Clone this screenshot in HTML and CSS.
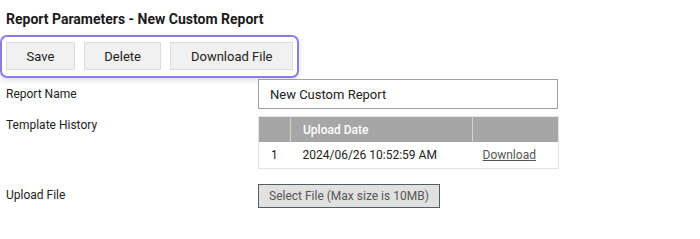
FILE: index.html
```html
<!DOCTYPE html>
<html lang="en">
<head>
    <meta charset="UTF-8">
    <title>Report Parameters</title>
    <link rel="stylesheet" href="styles.css">
</head>
<body>

    <h1 class="page-title">Report Parameters - New Custom Report</h1>

    <div class="toolbar">
        <button class="btn">Save</button>
        <button class="btn">Delete</button>
        <button class="btn">Download File</button>
    </div>

    <div class="form">
        <div class="form-row row-name">
            <label class="form-label">Report Name</label>
            <input type="text" class="text-input" value="New Custom Report">
        </div>

        <div class="form-row row-history">
            <label class="form-label">Template History</label>
            <table class="history">
                <thead>
                    <tr>
                        <th class="col-num"></th>
                        <th class="col-date">Upload Date</th>
                        <th class="col-link"></th>
                    </tr>
                </thead>
                <tbody>
                    <tr>
                        <td>1</td>
                        <td>2024/06/26 10:52:59 AM</td>
                        <td><a href="#" class="dl-link">Download</a></td>
                    </tr>
                </tbody>
            </table>
        </div>

        <div class="form-row row-upload">
            <label class="form-label">Upload File</label>
            <button class="file-btn">Select File (Max size is 10MB)</button>
        </div>
    </div>

</body>
</html>
```

FILE: styles.css
```css
body {
    margin: 0;
    background-color: #fff;
    color: #222;
    font-family: Roboto, "Liberation Sans", Arial, sans-serif;
    font-size: 12px;
}
.page-title {
    margin: 9px 0 0 6px;
    font-size: 14px;
    line-height: 20px;
    font-weight: bold;
    color: #1a1a1a;
}
.toolbar {
    display: inline-flex;
    gap: 9px;
    margin-top: 6px;
    padding: 5px 4px 6px 4px;
    border: 2px solid #8b7be3;
    border-radius: 7px;
    box-shadow: 0 2px 6px rgba(0, 0, 0, 0.15);
}
.btn {
    height: 28px;
    padding: 0 19.5px;
    background-color: #f1f1f1;
    border: 1px solid #dcdcdc;
    border-radius: 0;
    font-family: inherit;
    font-size: 13px;
    color: #222;
    cursor: pointer;
}
.form {
    padding-left: 6px;
}
.form-row {
    display: flex;
    align-items: flex-start;
}
.form-label {
    width: 252px;
    flex-shrink: 0;
    color: #222;
}
.row-name {
    margin-top: 1px;
}
.row-name .form-label {
    line-height: 30px;
}
.text-input {
    box-sizing: border-box;
    width: 300px;
    height: 30px;
    padding: 0 11px;
    border: 1px solid #a0a0a0;
    font-family: inherit;
    font-size: 13px;
    color: #222;
}
.row-history {
    margin-top: 7px;
}
.row-history .form-label {
    line-height: 16px;
    padding-top: 1px;
}
.history {
    width: 301px;
    border-collapse: collapse;
    border: 1px solid #e4e4e4;
    font-size: 12px;
}
.history th {
    height: 25px;
    padding: 0 12px;
    background-color: #a6a6a6;
    color: #fff;
    font-weight: 500;
    text-align: left;
    border-left: 1px solid #d2d2d2;
}
.history th:first-child {
    border-left: none;
}
.history td {
    height: 26px;
    padding: 0 12px;
    color: #222;
}
.history td:last-child {
    padding-left: 10px;
}
.col-num {
    width: 7px;
}
.col-date {
    width: 157px;
}
.dl-link {
    color: #555;
    text-decoration: underline;
}
.row-upload {
    margin-top: 15px;
}
.row-upload .form-label {
    line-height: 23px;
}
.file-btn {
    height: 24px;
    padding: 0 10px;
    background-color: #e1e1e1;
    border: 1px solid #4f5f66;
    border-radius: 0;
    font-family: inherit;
    font-size: 12px;
    color: #555;
}
```
